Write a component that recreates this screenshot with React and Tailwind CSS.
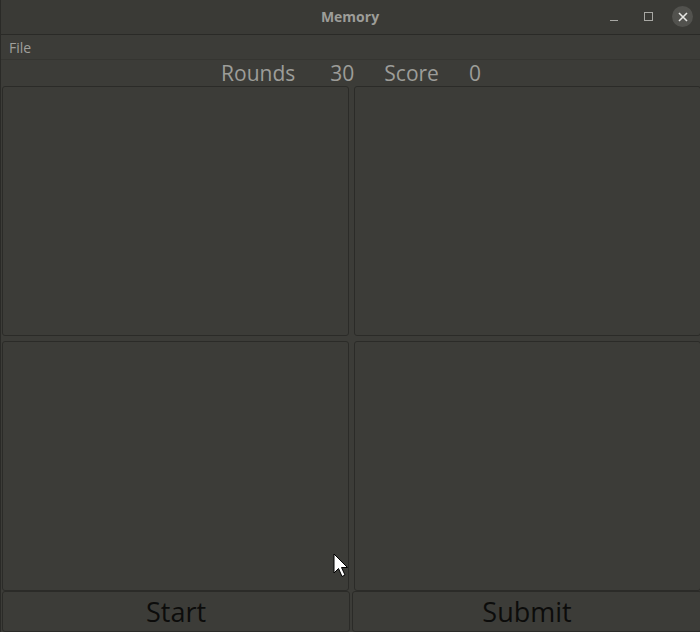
const Panel = () => (
  <div className="rounded-[3px] border border-[#2b2b28] bg-[#3c3c38]" />
);

const App = () => {
  return (
    <div
      className="relative flex h-[632px] w-[700px] flex-col overflow-hidden bg-[#3c3c38]"
      style={{ fontFamily: '"Open Sans", "Noto Sans", sans-serif' }}
    >
      <div className="relative flex h-[35px] shrink-0 items-center justify-center border-b border-[#2a2a27] bg-[#3a3a36] pb-[2px]">
        <span className="text-[14px] font-bold text-[#9d9d99]">Memory</span>
        <div className="absolute right-[7px] top-[6px] flex items-center">
          <div className="flex h-[20px] w-[20px] items-end justify-center pb-[6px]">
            <div className="h-[1px] w-[8px] bg-[#a8a8a4]" />
          </div>
          <div className="ml-[14px] flex h-[20px] w-[20px] items-center justify-center">
            <div className="h-[9px] w-[9px] border border-[#a8a8a4]" />
          </div>
          <div className="ml-[14px] flex h-[21px] w-[21px] items-center justify-center rounded-full bg-[#52524e]">
            <svg width="10" height="10" viewBox="0 0 10 10">
              <path d="M1 1 L9 9 M9 1 L1 9" stroke="#e6e6e3" strokeWidth="1.6" />
            </svg>
          </div>
        </div>
      </div>

      <div className="flex h-[25px] shrink-0 items-center border-b border-[#353531] pl-[9px] text-[14px] text-[#a0a09c]">
        File
      </div>

      <div className="flex h-[26px] shrink-0 items-center justify-center pl-[2px] text-[21px] leading-none text-[#9d9d99]">
        <span>Rounds</span>
        <span className="ml-[35px]">30</span>
        <span className="ml-[30px]">Score</span>
        <span className="ml-[30px]">0</span>
      </div>

      <div className="grid h-[505px] shrink-0 grid-cols-[347px_347px] grid-rows-[250px_250px] gap-x-[5px] gap-y-[5px] pl-[2px]">
        <Panel />
        <Panel />
        <Panel />
        <Panel />
      </div>

      <div className="grid flex-1 grid-cols-[348px_350px] gap-x-[2px] pl-[2px]">
        <button className="rounded-[3px] border border-[#2b2b28] bg-[#3c3c38] text-[27px] font-medium leading-none text-[#0c0c0b]">
          Start
        </button>
        <button className="rounded-[3px] border border-[#2b2b28] bg-[#3c3c38] text-[27px] font-medium leading-none text-[#0c0c0b]">
          Submit
        </button>
      </div>

      <div className="absolute inset-y-0 left-0 w-[1px] bg-[#2a2a27]" />

      <svg
        className="absolute left-[333px] top-[553px]"
        width="16"
        height="26"
        viewBox="0 0 16 26"
      >
        <path
          d="M1 1 L1 20 L5.5 15.5 L9 23.5 L12 22 L8.5 14.5 L14.5 14.5 Z"
          fill="#ffffff"
          stroke="#000000"
          strokeWidth="1"
          strokeLinejoin="round"
        />
      </svg>
    </div>
  );
};

export default App;
